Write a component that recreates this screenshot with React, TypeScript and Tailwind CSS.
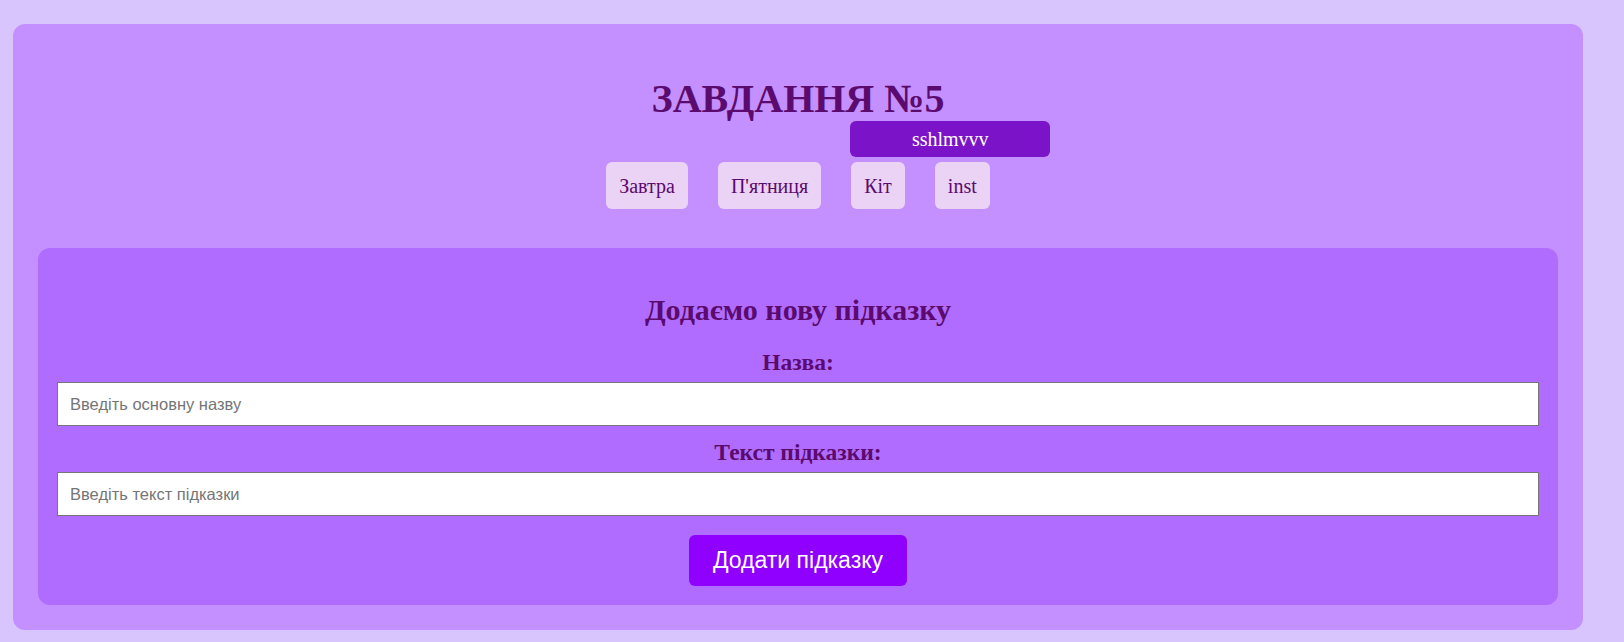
import React from 'react';

const serif = "font-['Liberation_Serif','Times_New_Roman',serif]";
const sans = "font-['Liberation_Sans',Arial,sans-serif]";

const links = ['Завтра', "П'ятниця", 'Кіт', 'inst'];

const App: React.FC = () => {
  return (
    <div className={`min-h-screen bg-[#d8c5fe] pt-[24px] pb-[11px] ${serif}`}>
      <div className="ml-[13px] w-[1570px] rounded-xl bg-[#c48ffe] px-[25px] pb-[25px]">
        {/* Header */}
        <h1 className="pt-[52px] text-center text-[40px] font-bold leading-[46px] text-[#5b0a6e]">
          ЗАВДАННЯ №5
        </h1>
        <nav className="mt-[40px] flex justify-center gap-[30px]">
          {links.map((link) => (
            <div key={link} className="relative">
              {link === 'Кіт' && (
                <div className="absolute left-[-1px] top-[-41px] flex h-[36px] w-[200px] items-center justify-center rounded-md bg-[#7b14c8] text-[20px] text-white">
                  sshlmvvv
                </div>
              )}
              <button className="h-[47px] rounded-md bg-[#ebd3f5] px-[13px] text-[20px] text-[#5b0a6e]">
                {link}
              </button>
            </div>
          ))}
        </nav>

        {/* Form */}
        <div className="mt-[39px] rounded-xl bg-[#b06cff] px-[19px] pb-[19px] pt-[44px] text-center">
          <h2 className="text-[30px] font-bold leading-[35px] text-[#5b0a6e]">Додаємо нову підказку</h2>
          <label className="mt-[22px] block text-[23.5px] font-bold leading-[27px] text-[#5b0a6e]">Назва:</label>
          <input
            type="text"
            placeholder="Введіть основну назву"
            className={`mt-[6px] block h-[44px] w-full border border-[#767676] bg-white px-[12px] text-[16.5px] text-black placeholder:text-[#757575] ${sans}`}
          />
          <label className="mt-[13px] block text-[23.5px] font-bold leading-[27px] text-[#5b0a6e]">Текст підказки:</label>
          <input
            type="text"
            placeholder="Введіть текст підказки"
            className={`mt-[6px] block h-[44px] w-full border border-[#767676] bg-white px-[12px] text-[16.5px] text-black placeholder:text-[#757575] ${sans}`}
          />
          <button
            className={`mt-[19px] h-[51px] rounded-md bg-[#8f00ff] px-[24px] text-[23px] text-white ${sans}`}
          >
            Додати підказку
          </button>
        </div>
      </div>
    </div>
  );
};

export default App;
